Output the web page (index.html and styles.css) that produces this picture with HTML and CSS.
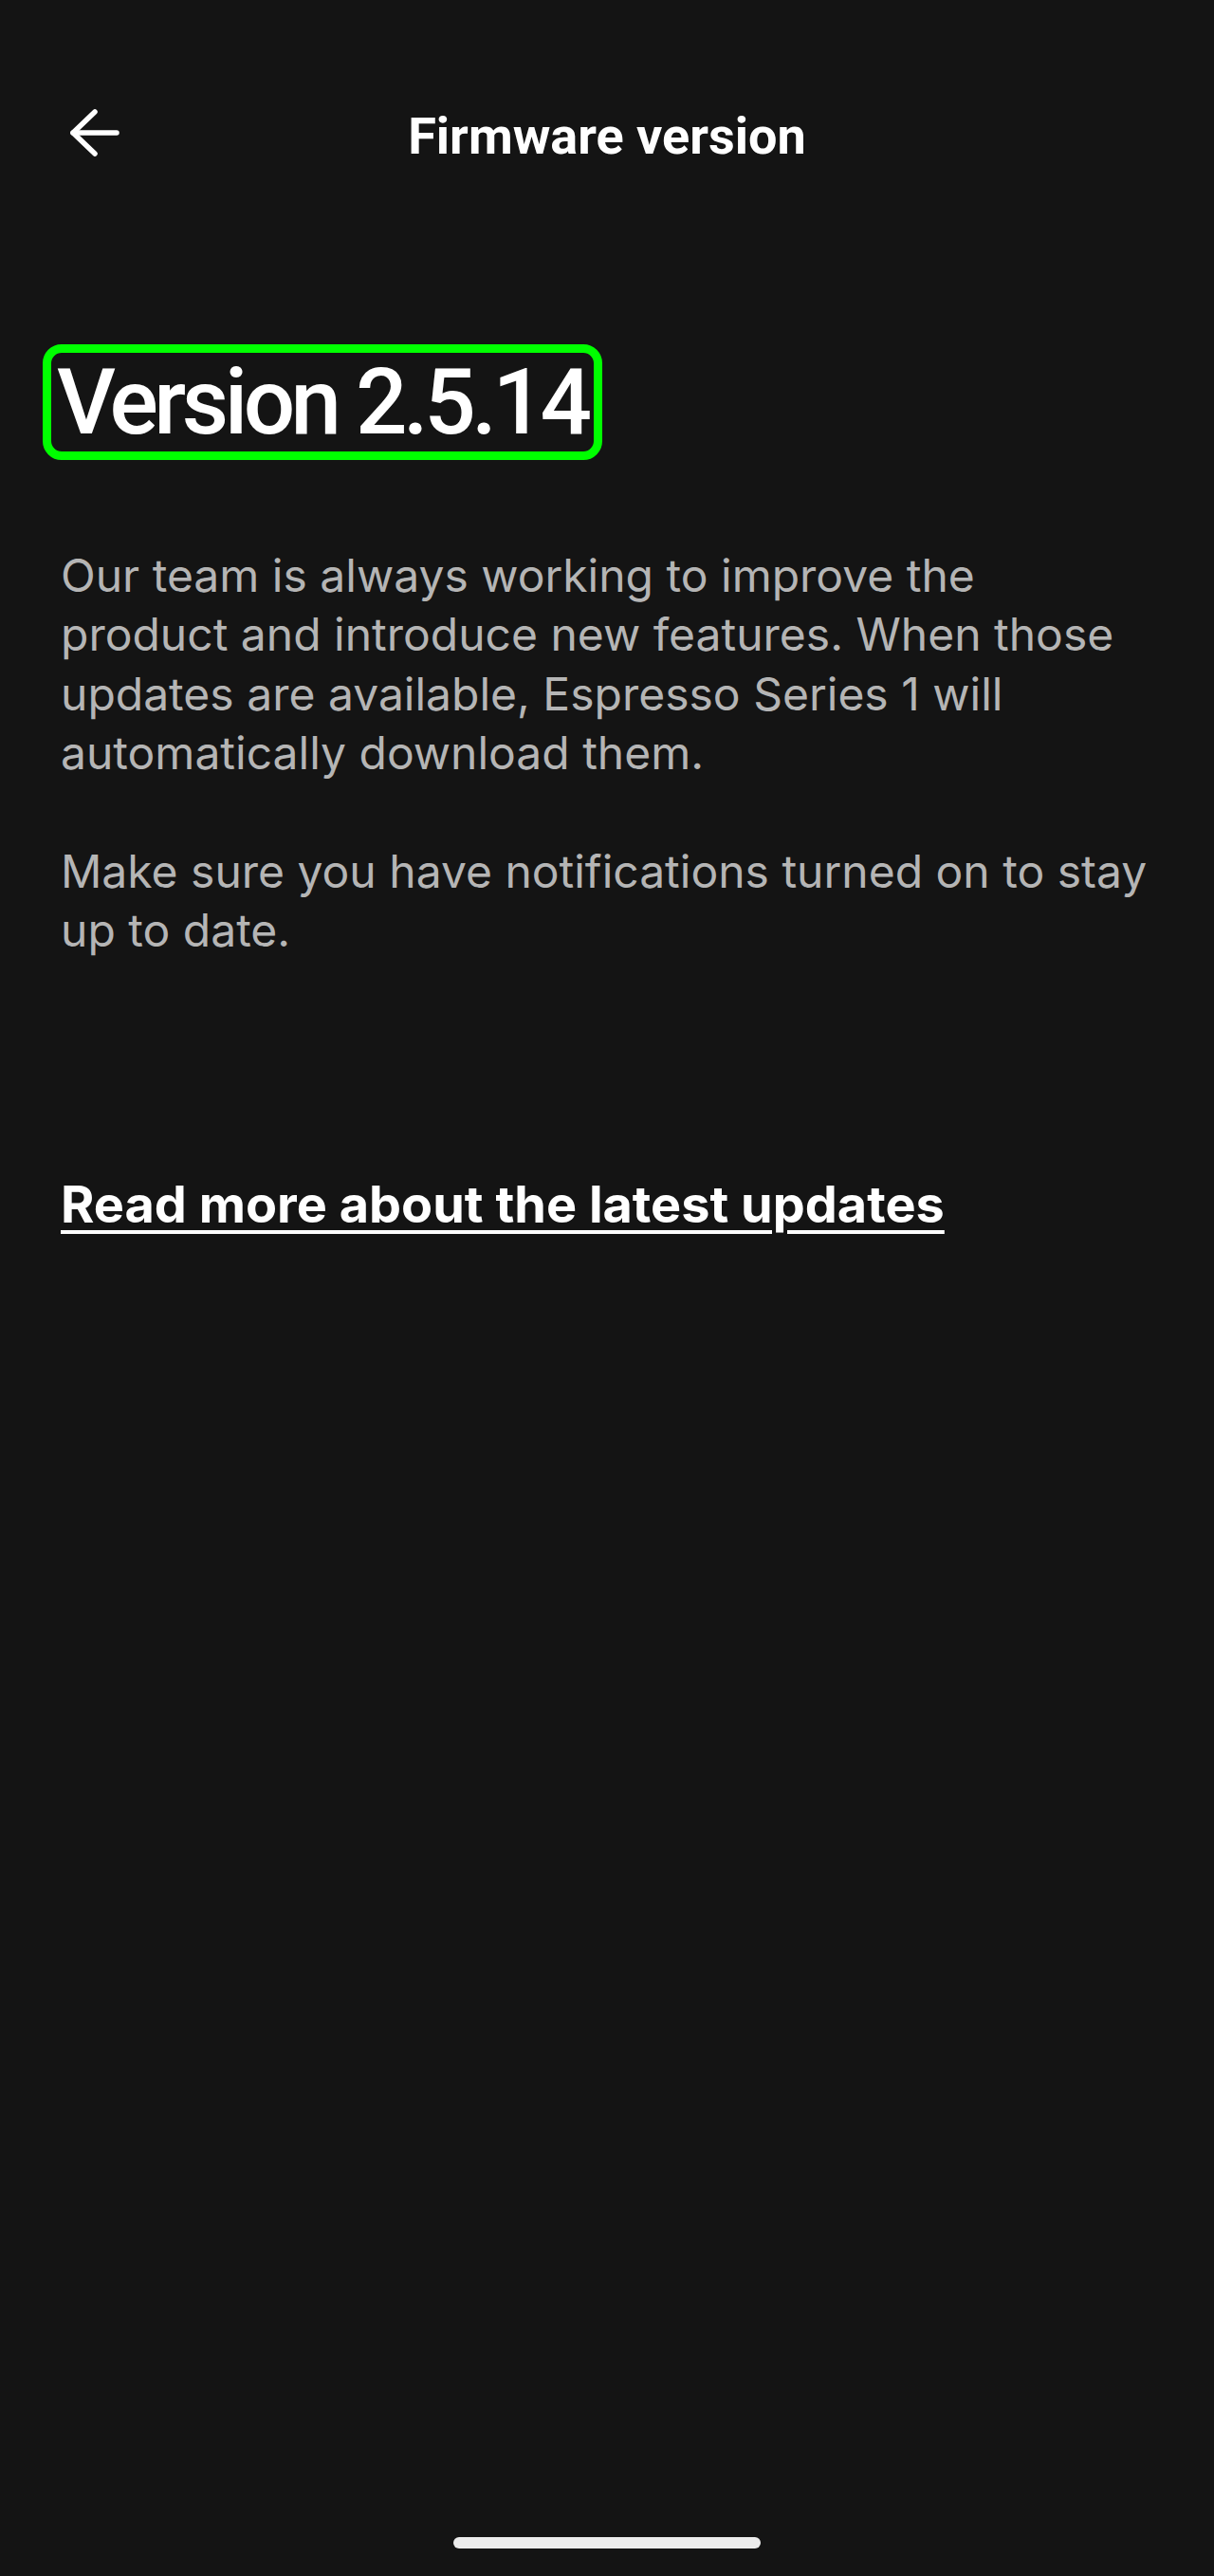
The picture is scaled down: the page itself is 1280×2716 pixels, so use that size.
FILE: index.html
```html
<!DOCTYPE html>
<html lang="en">
<head>
<meta charset="utf-8">
<title>Firmware version</title>
<link rel="stylesheet" href="styles.css">
</head>
<body>
<div class="screen">
  <header class="topbar">
    <button class="back" aria-label="Back">
      <svg width="56" height="56" viewBox="0 0 56 56" fill="none" stroke="#ffffff" stroke-width="5.5" stroke-linecap="round" stroke-linejoin="round">
        <path d="M53 28H7"/>
        <path d="M30 6L7 28L30 50"/>
      </svg>
    </button>
    <h1 class="title">Firmware version</h1>
    <span class="spacer"></span>
  </header>
  <main class="content">
    <div class="version-wrap"><span class="version">Version 2.5.14</span></div>
    <p class="desc">Our team is always working to improve the product and introduce new features. When those updates are available, Espresso Series 1 will automatically download them.</p>
    <p class="desc second">Make sure you have notifications turned on to stay up to date.</p>
    <a class="more" href="#">Read more about the latest updates</a>
  </main>
  <div class="home-bar"></div>
</div>
</body>
</html>
```
FILE: styles.css
```css
html, body {
  margin: 0;
  padding: 0;
  background: #141414;
}
.screen {
  width: 1280px;
  height: 2716px;
  background: #141414;
  display: flex;
  flex-direction: column;
  font-family: Inter, "Noto Sans", sans-serif;
  color: #ffffff;
}
.topbar {
  display: grid;
  grid-template-columns: 1fr auto 1fr;
  align-items: start;
  padding: 108px 0 0 0;
  height: 68px;
}
.back {
  justify-self: start;
  margin: 4px 0 0 70px;
  width: 56px;
  height: 56px;
  padding: 0;
  border: 0;
  background: transparent;
  display: flex;
}
.title {
  margin: 4px 0 0 0;
  font-family: Roboto, "Liberation Sans", sans-serif;
  font-size: 54px;
  line-height: 64px;
  font-weight: 700;
  color: #ffffff;
}
.content {
  display: flex;
  flex-direction: column;
  align-items: flex-start;
  padding: 187px 0 0 64px;
  flex: 1;
}
.version-wrap {
  display: inline-flex;
  border: 9px solid #00ff00;
  border-radius: 20px;
  margin-left: -19px;
  padding: 0 6px;
}
.version {
  font-family: Roboto, "Liberation Sans", sans-serif;
  font-weight: 500;
  font-size: 96px;
  line-height: 104px;
  letter-spacing: -4.5px;
  color: #ffffff;
}
.desc {
  margin: 91px 0 0 0;
  width: 1150px;
  font-size: 48px;
  line-height: 62.4px;
  color: #b5b5b5;
  font-weight: 400;
}
.desc.second {
  margin-top: 62.4px;
}
.more {
  margin-top: 222px;
  font-size: 54px;
  line-height: 70.2px;
  font-weight: 700;
  color: #ffffff;
  text-decoration: underline;
  text-decoration-thickness: 4px;
  text-underline-offset: 8px;
}
.home-bar {
  align-self: center;
  width: 324px;
  height: 12px;
  border-radius: 6px;
  background: #ececec;
  margin-bottom: 29px;
}
```
